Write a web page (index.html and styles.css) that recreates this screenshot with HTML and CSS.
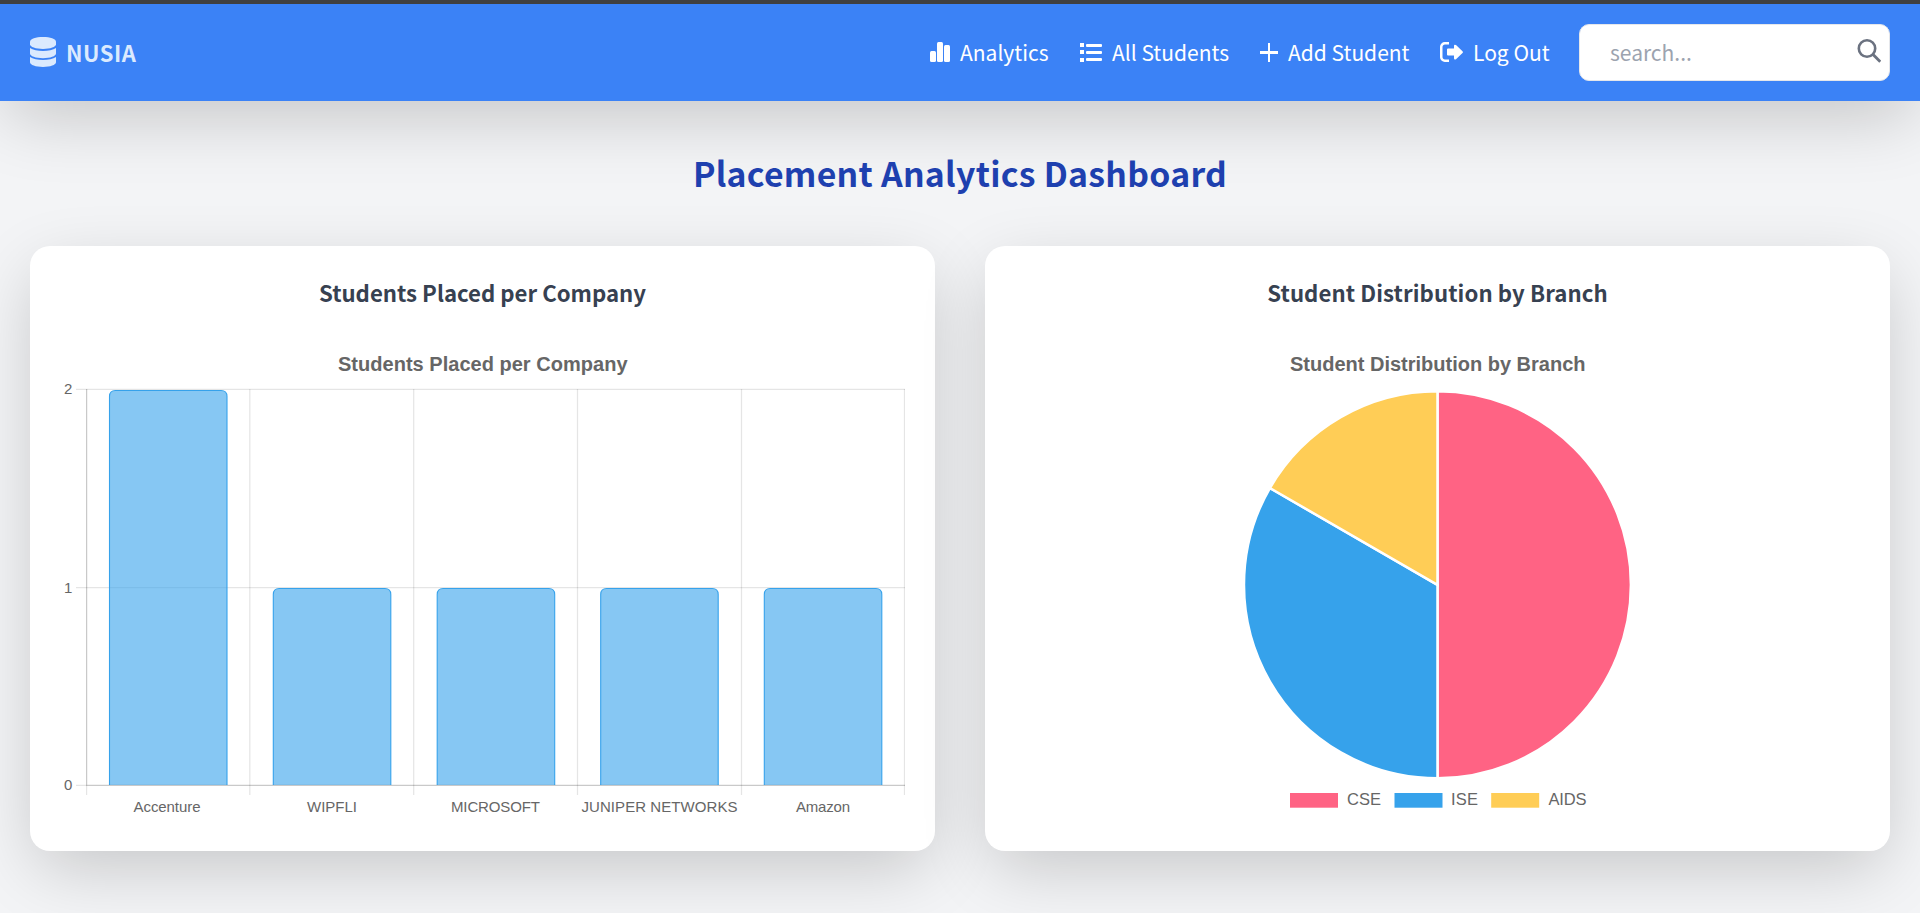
FILE: index.html
```html
<!DOCTYPE html>
<html lang="en">
<head>
<meta charset="utf-8">
<title>Placement Analytics Dashboard</title>
<link rel="stylesheet" href="styles.css">
</head>
<body>
<header class="navbar">
  <a class="brand">
    <svg width="26" height="30" viewBox="0 0 26 30" fill="currentColor"><path d="M13 0c7.200 0 13 2.100 13 4.700v2.500c0 2.600-5.800 4.700-13 4.700S0 9.800 0 7.200V4.700C0 2.100 5.800 0 13 0z"/><path d="M0 11c2.800 2 7.900 2.900 13 2.900s10.200-.9 13-2.900v5.600c0 2.600-5.800 4.700-13 4.700S0 19.200 0 16.600z"/><path d="M0 20c2.800 2 7.900 2.900 13 2.900S23.200 22 26 20v5.300C26 27.900 20.200 30 13 30S0 27.900 0 25.300z"/></svg>
    <span class="brand-name">NUSIA</span>
  </a>
  <nav class="links">
    <a class="link analytics"><svg width="20" height="20" viewBox="0 0 20 20" fill="currentColor"><rect y="9" width="6" height="11" rx="1.500"/><rect x="7" width="6" height="20" rx="1.500"/><rect x="14" y="3" width="6" height="17" rx="1.500"/></svg><span>Analytics</span></a>
    <a class="link students"><svg width="22" height="20" viewBox="0 0 22 20" fill="currentColor"><path d="M0 1h4v4H0zM0 8h4v4H0zM0 16h4v4H0z"/><rect x="6" y="2" width="16" height="3" rx="1"/><rect x="6" y="9" width="16" height="3" rx="1"/><rect x="6" y="16" width="16" height="3" rx="1"/></svg><span>All Students</span></a>
    <a class="link add"><svg width="18" height="20" viewBox="0 0 18 20" fill="currentColor"><path d="M8 1h2v8h8v3h-8v8H8v-8H0V9h8z"/></svg><span>Add Student</span></a>
    <a class="link logout"><svg width="23" height="20" viewBox="0 0 23 20"><path d="M9 1.250H5A3.700 3.700 0 0 0 1.250 5v10A3.700 3.700 0 0 0 5 18.750h4" fill="none" stroke="currentColor" stroke-width="2.500"/><path d="M8 6.500h6V4q0-2 2-.9l6.500 6.200q.8.900 0 1.800L16 17.200q-2 .9-2-1v-2.700H8q-1 0-1-1v-5q0-1 1-1z" fill="currentColor"/></svg><span>Log Out</span></a>
  </nav>
  <form class="search">
    <span class="placeholder">search...</span>
    <svg width="24" height="24" viewBox="0 0 24 24" fill="none" stroke="currentColor"><circle cx="10" cy="9.500" r="8.200" stroke-width="2.600"/><path d="M15.800 15.300l7.500 7.500" stroke-width="2.900"/></svg>
  </form>
</header>
<main>
  <h1 class="page-title"><span>Placement Analytics Dashboard</span></h1>
  <div class="cards">
    <section class="card">
      <h2 class="card-title company">Students Placed per Company</h2>
      <svg class="chart" viewBox="60 336 845 485">
        <text class="chart-title" x="338" y="371" textLength="289.500">Students Placed per Company</text>
        <g class="grid">
          <path d="M76 389.400H905M76 587.500H905M76 785.400H905"/>
          <path d="M86.600 389V795M249.800 389V795M413.700 389V795M577.500 389V795M741.500 389V795M904.500 389V795"/>
        </g>
        <g class="bar">
          <path d="M109.500 785V396.500q0-6 6-6h105.500q6 0 6 6V785"/>
          <path d="M273.300 785V594.500q0-6 6-6h105.500q6 0 6 6V785"/>
          <path d="M437.200 785V594.500q0-6 6-6h105.500q6 0 6 6V785"/>
          <path d="M600.700 785V594.500q0-6 6-6h105.500q6 0 6 6V785"/>
          <path d="M764.300 785V594.500q0-6 6-6h105.500q6 0 6 6V785"/>
        </g>
        <path class="axis" d="M86.600 389V785.400H905"/>
        <g class="tick">
          <text x="64" y="394">2</text><text x="64" y="592.500">1</text><text x="64" y="790">0</text>
          <text x="133.500" y="812" textLength="67">Accenture</text>
          <text x="307" y="812" textLength="50">WIPFLI</text>
          <text x="451" y="812" textLength="89">MICROSOFT</text>
          <text x="581.500" y="812" textLength="156">JUNIPER NETWORKS</text>
          <text x="796" y="812" textLength="54">Amazon</text>
        </g>
      </svg>
    </section>
    <section class="card">
      <h2 class="card-title branch">Student Distribution by Branch</h2>
      <svg class="chart" viewBox="1015 336 845 485">
        <text class="chart-title" x="1290" y="371" textLength="295.500">Student Distribution by Branch</text>
        <g class="pie">
          <path fill="#ff6384" d="M1437.500 584.800V391.300a193.500 193.500 0 0 1 0 387z"/>
          <path fill="#36a2eb" d="M1437.500 584.800V778.300A193.500 193.500 0 0 1 1269.900 488.050z"/>
          <path fill="#ffcd56" d="M1437.500 584.800L1269.900 488.050A193.500 193.500 0 0 1 1437.500 391.300z"/>
        </g>
        <rect x="1290" y="793" width="48" height="14.700" fill="#ff6384"/>
        <rect x="1394.500" y="793" width="48" height="14.700" fill="#36a2eb"/>
        <rect x="1491.200" y="793" width="48" height="14.700" fill="#ffcd56"/>
        <g class="legend">
          <text x="1347" y="805" textLength="34">CSE</text>
          <text x="1451" y="805" textLength="27">ISE</text>
          <text x="1548.500" y="805" textLength="38">AIDS</text>
        </g>
      </svg>
    </section>
  </div>
</main>
</body>
</html>
```

FILE: styles.css
```css
* { box-sizing: border-box; }
body {
  margin: 0;
  height: 913px;
  overflow: hidden;
  background: #f3f4f6;
  font-family: "Noto Sans CJK SC", "Noto Sans", sans-serif;
}
.navbar {
  height: 101px;
  padding: 0 30px;
  border-top: 4px solid #404040;
  background: #3b82f6;
  color: #fff;
  display: flex;
  align-items: center;
  box-shadow: 0 21px 70px -7px rgba(0, 0, 0, .2);
}
.brand {
  display: flex;
  align-items: center;
  gap: 10px;
  color: #dbeafe;
  font-size: 22px;
  font-weight: 700;
  letter-spacing: .5px;
}
.brand svg { margin-bottom: 2px; }
.brand-name, .link span, .placeholder { padding-bottom: 2px; }
.links { margin-left: auto; display: flex; gap: 30px; }
.link { display: flex; align-items: center; gap: 10px; font-size: 21px; white-space: nowrap; }
.link svg { flex: none; margin-bottom: 2px; }
.analytics { width: 120px; }
.students { width: 150px; }
.add { width: 150px; }
.logout { width: 109px; }
.search {
  width: 311px;
  height: 57px;
  margin-left: 30px;
  padding: 0 8px 0 30px;
  border: 1px solid #e5e7eb;
  border-radius: 10px;
  background: #fff;
  color: #6b7280;
  display: flex;
  align-items: center;
  justify-content: space-between;
}
.placeholder { color: #9ca3af; font-size: 21px; }
.search svg { margin-bottom: 4px; }
main { padding: 44px 30px 0; }
.page-title {
  margin: 0 0 46px;
  height: 55px;
  line-height: 55px;
  text-align: center;
  color: #1e40af;
  font-size: 33.800px;
  font-weight: 700;
  letter-spacing: .27px;
}
.cards { display: grid; grid-template-columns: 1fr 1fr; gap: 50px; }
.card {
  height: 605px;
  padding: 29px 30px 30px;
  border-radius: 20px;
  background: #fff;
  box-shadow: 0 21px 70px -7px rgba(0, 0, 0, .2);
}
.card-title {
  margin: 0 0 26px;
  height: 35px;
  line-height: 35px;
  text-align: center;
  color: #374151;
  font-size: 22.200px;
  font-weight: 700;
}
.branch { letter-spacing: .08px; }
.chart { display: block; width: 845px; height: 485px; font-family: "Liberation Sans", Arial, sans-serif; fill: #666; }
.chart-title { font-size: 20px; font-weight: 700; }
.grid path { stroke: rgba(0, 0, 0, .1); stroke-width: 1.250; fill: none; }
.axis { stroke: rgba(0, 0, 0, .12); stroke-width: 1.250; fill: none; }
.bar path { fill: rgba(54, 162, 235, .6); stroke: #36a2eb; stroke-width: 1.100; }
.tick { font-size: 15px; }
.pie path { stroke: #fff; stroke-width: 2.500; }
.legend { font-size: 16.500px; }
```
